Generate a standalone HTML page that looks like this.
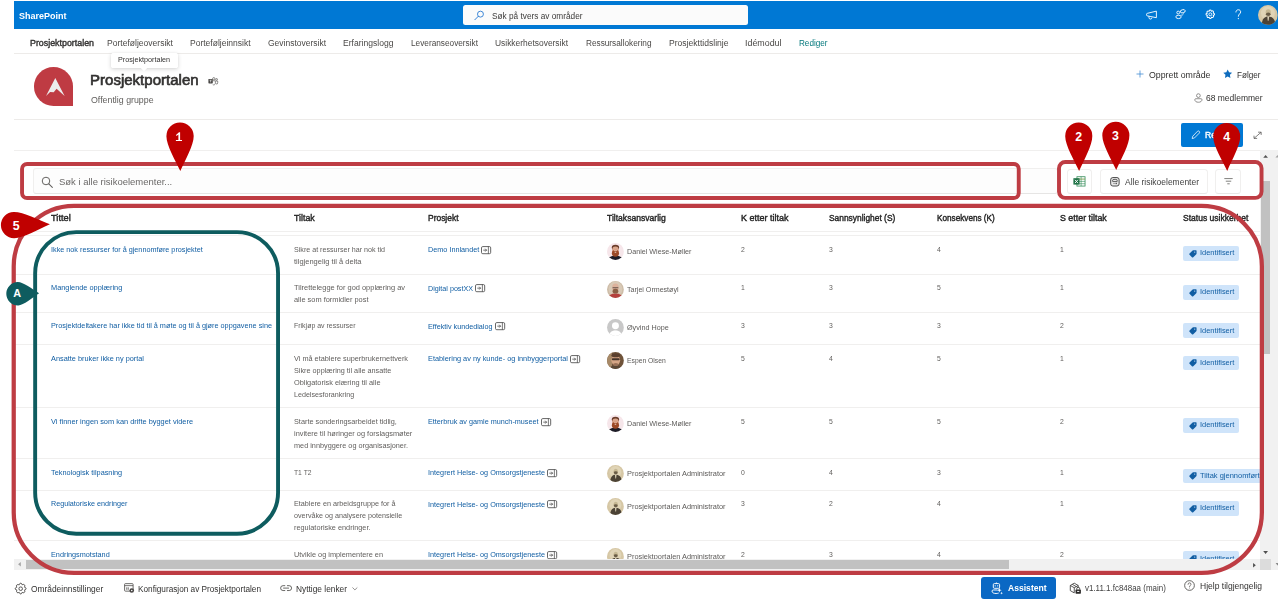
<!DOCTYPE html>
<html lang="nb">
<head>
<meta charset="utf-8">
<title>Prosjektportalen</title>
<style>
html,body{margin:0;padding:0;background:#fff;}
body{width:1278px;height:603px;position:relative;overflow:hidden;font-family:"Liberation Sans",sans-serif;}
.abs{position:absolute;}
.t{position:absolute;white-space:nowrap;transform-origin:0 50%;display:block;}
svg{position:absolute;overflow:visible;}
.hl{position:absolute;height:1px;background:#edebe9;}
#suite{left:14px;top:1px;width:1264px;height:28.2px;background:#0078d4;}
#sbox{left:462.5px;top:5.1px;width:285px;height:19.6px;background:#fbfbfb;border-radius:2.5px;}
#tip{left:110.7px;top:53.3px;width:67.3px;height:15.1px;background:#fff;border-radius:1.5px;box-shadow:0 1.2px 4.5px rgba(0,0,0,.17),0 0 1px rgba(0,0,0,.10);}
#tipb{left:141.4px;top:65.4px;width:6px;height:6px;background:#fff;transform:rotate(45deg);}
#logo{left:33.6px;top:67.2px;width:39.3px;height:39px;background:#bf3b43;border-radius:50% 50% 0 50%;}
#editbtn{left:1180.6px;top:122.7px;width:62.8px;height:24.2px;background:#0078d4;border-radius:2px;}
#sinput{left:33.0px;top:168.4px;width:1024.6px;height:26px;box-sizing:border-box;border:1px solid #f0efee;border-bottom-color:#e6e5e4;border-radius:3px;background:#fdfdfd;}
.tb{position:absolute;top:168.5px;height:25.6px;box-sizing:border-box;border:1px solid #f0efee;border-bottom-color:#e8e7e6;border-radius:3.5px;background:#fff;}
#tblclip{left:14px;top:200px;width:1246px;height:359.1px;overflow:hidden;}
#tbl{position:absolute;left:-14px;top:-200px;width:1278px;height:603px;}
.rl{position:absolute;left:14px;width:1246px;height:1px;background:#f0efee;}
.bdg{position:absolute;left:1183.2px;height:14.8px;background:#cfe4fa;border-radius:2px;}
.bdg svg{left:4.6px;top:2.7px;}
.pico{position:absolute;}
.avs{position:absolute;left:606.5px;}
#hsb{left:14px;top:559.1px;width:1246px;height:10.9px;background:#f1f1f1;}
#hth{left:25.6px;top:560.1px;width:983.3px;height:8.5px;background:#c1c1c1;}
#vsb{left:1260px;top:150.4px;width:18px;height:419.6px;background:#f1f1f1;}
#vth{left:1261.3px;top:180.8px;width:8.5px;height:173px;background:#c1c1c1;}
#corner{left:1260px;top:559.1px;width:11px;height:10.9px;background:#dcdcdc;}
#asst{left:980.6px;top:577.1px;width:75.1px;height:21.7px;background:#0a68c4;border-radius:3px;}
.box{position:absolute;box-sizing:border-box;}
</style>
</head>
<body>
<svg width="0" height="0" style="left:0;top:0"><defs><clipPath id="avc"><circle cx="8.5" cy="8.5" r="8.5"/></clipPath><filter id="bl" x="-10%" y="-10%" width="120%" height="120%"><feGaussianBlur stdDeviation="0.35"/></filter></defs></svg>
<!-- suite bar -->
<div class="abs" id="suite"></div>
<div class="abs" id="sbox"></div>
<svg style="left:473.6px;top:10px" width="10.6" height="10.6" viewBox="0 0 20 20"><circle cx="12.2" cy="7.8" r="5.6" fill="none" stroke="#2b7cd3" stroke-width="1.7"/><path d="M8.2 11.8 1.6 18.4" stroke="#2b7cd3" stroke-width="1.8" stroke-linecap="round"/></svg>
<!-- suite icons -->
<svg style="left:1145.8px;top:9.7px" width="11.6" height="9.8" viewBox="0 0 24 20"><path d="M21.5 2.2v13.6L8.5 13.2l-5.8-1.2a1.8 1.8 0 0 1-1.5-1.8V8.6A1.8 1.8 0 0 1 2.7 6.8z" fill="none" stroke="#fff" stroke-width="1.9" stroke-linejoin="round"/><path d="M6.2 12.8v2.6a3 3 0 0 0 6 .4" fill="none" stroke="#fff" stroke-width="1.9"/></svg>
<svg style="left:1175.4px;top:9.4px" width="11" height="10.4" viewBox="0 0 22 21"><ellipse cx="15.6" cy="4.6" rx="5" ry="3.2" fill="none" stroke="#fff" stroke-width="1.8" transform="rotate(-14 15.6 4.6)"/><circle cx="6.4" cy="7.2" r="2.9" fill="none" stroke="#fff" stroke-width="1.8"/><ellipse cx="7" cy="16" rx="5.4" ry="3.4" fill="none" stroke="#fff" stroke-width="1.8"/><path d="M11.6 12.4c2.6.6 5-.6 5.4-3.4" fill="none" stroke="#fff" stroke-width="1.6"/></svg>
<svg style="left:1204.6px;top:9.4px" width="10.6" height="10.6" viewBox="0 0 24 24"><path d="M12 2.2c1.2 0 2 .9 2.3 2.1l.2.8 1-.4c1.1-.6 2.4-.5 3.200.4s1 2.100.400 3.200l-.4 1 .8.200c1.200.3 2.100 1.100 2.100 2.300s-.9 2-2.100 2.300l-.8.200.4 1c.6 1.100.5 2.400-.4 3.200s-2.100 1-3.200.400l-1-.4-.2.800c-.3 1.200-1.100 2.100-2.300 2.100s-2-.9-2.300-2.100l-.2-.8-1 .4c-1.100.6-2.400.5-3.200-.4s-1-2.100-.4-3.200l.4-1-.8-.2C3.100 14 2.200 13.200 2.200 12s.9-2 2.100-2.300l.8-.2-.4-1c-.6-1.100-.5-2.400.4-3.200s2.100-1 3.200-.4l1 .4.200-.8C9.800 3.100 10.800 2.200 12 2.200z" fill="none" stroke="#fff" stroke-width="2.3" stroke-linejoin="round"/><circle cx="12" cy="12" r="3.300" fill="none" stroke="#fff" stroke-width="2"/></svg>
<svg style="left:1235.4px;top:9.4px" width="6.6" height="10.8" viewBox="0 0 12 20"><path d="M1.6 5.600C1.800 3 3.600 1.400 6.100 1.400s4.300 1.600 4.300 4c0 3.600-4.300 3.700-4.300 8" fill="none" stroke="#fff" stroke-width="1.700" stroke-linecap="round"/><circle cx="6.100" cy="17.800" r="1.200" fill="#fff"/></svg>
<svg style="left:1258.2px;top:4.9px" width="19.8" height="19.8" viewBox="0 0 17 17"><g clip-path="url(#avc)"><rect width="17" height="17" fill="#d6c7a5"/><g filter="url(#bl)"><circle cx="8.5" cy="7" r="6" fill="#e0d4b6"/><path d="M3.2 16.5C3.6 11.600 5.800 9.800 8.800 9.800s5.400 1.600 6 5.600l-.4 2H3.200z" fill="#4b4235"/><path d="M8 9.900h1.600l-.5 3.600h-.7z" fill="#ddd2b8"/><ellipse cx="8.800" cy="6.300" rx="2.200" ry="2.600" fill="#c5b792"/><ellipse cx="8.800" cy="7.900" rx="2" ry="1.500" fill="#6b5d46"/></g></g></svg>
<!-- nav line -->
<div class="hl" style="left:14px;top:53px;width:1264px;"></div>
<!-- tooltip -->
<div class="abs" id="tipb"></div>
<div class="abs" id="tip"></div>
<div class="abs" style="left:141.4px;top:64px;width:6px;height:6px;background:#fff;transform:rotate(45deg);"></div>
<!-- site header -->
<div class="abs" id="logo"></div>
<svg style="left:33.6px;top:67.2px" width="39.3" height="39" viewBox="0 0 39.3 39"><path d="M21.3 11 30.6 28.9 22.6 21.7 19.7 25.3 16.1 25 12 28.9z" fill="#ececec"/></svg>
<svg style="left:207.6px;top:76.6px" width="10.400" height="8" viewBox="0 0 26 20"><rect x="1" y="5" width="11" height="11" rx="1.500" fill="#4a4846"/><path d="M4 8h5M6.500 8v5.500" stroke="#fff" stroke-width="1.500"/><circle cx="14.500" cy="4.500" r="3" fill="none" stroke="#4a4846" stroke-width="1.600"/><circle cx="21.500" cy="6" r="2.200" fill="none" stroke="#4a4846" stroke-width="1.500"/><path d="M13 9.500h5.500v6a4.500 4.500 0 0 1-6.500 3.800M19.500 10h4.800v4.500a3.200 3.200 0 0 1-4.500 2.800" fill="none" stroke="#4a4846" stroke-width="1.500"/></svg>
<svg style="left:1135.600px;top:70.300px" width="8" height="8" viewBox="0 0 16 16"><path d="M8 1v14M1 8h14" stroke="#3a86d0" stroke-width="1.500"/></svg>
<svg style="left:1222.900px;top:69.300px" width="9.400" height="9.200" viewBox="0 0 20 19"><path d="M10 .8l2.900 5.900 6.500.9-4.700 4.600 1.100 6.500L10 15.600l-5.800 3.100 1.100-6.500L.6 7.600l6.500-.9z" fill="#0f6cbd"/></svg>
<svg style="left:1194.300px;top:92.600px" width="8.800" height="9.900" viewBox="0 0 17 19"><circle cx="8.500" cy="5" r="3.600" fill="none" stroke="#605e5c" stroke-width="1.300"/><path d="M3.400 11h10.200a1.800 1.800 0 0 1 1.800 1.800c0 3.400-3 5-6.900 5s-6.900-1.600-6.900-5A1.800 1.800 0 0 1 3.400 11z" fill="none" stroke="#605e5c" stroke-width="1.300"/></svg>
<div class="hl" style="left:14px;top:119px;width:1264px;"></div>
<div class="hl" style="left:14px;top:149.600px;width:1246px;background:#f0efee;"></div>
<!-- command bar -->
<div class="abs" id="editbtn"></div>
<svg style="left:1190.600px;top:130.400px" width="9.600" height="9.600" viewBox="0 0 20 20"><path d="M13.600 2.600a2.700 2.700 0 0 1 3.800 3.800L7.200 16.600l-4.800 1.200 1.200-4.800z" fill="none" stroke="#fff" stroke-width="1.600" stroke-linejoin="round"/></svg>
<svg style="left:1252.600px;top:130.600px" width="9.200" height="8.600" viewBox="0 0 20 18"><path d="M2.500 15.500 17.500 2.500M11 2.200h6.800v6M9 15.800H2.200v-6" fill="none" stroke="#484644" stroke-width="1.500"/></svg>
<!-- search row -->
<div class="abs" id="sinput"></div>
<svg style="left:41.100px;top:175.700px" width="12.200" height="12.200" viewBox="0 0 20 20"><circle cx="8.200" cy="8.200" r="6.200" fill="none" stroke="#605e5c" stroke-width="1.600"/><path d="M12.800 12.800 18.600 18.600" stroke="#605e5c" stroke-width="1.700" stroke-linecap="round"/></svg>
<div class="tb" style="left:1066.600px;width:25px;"></div>
<div class="tb" style="left:1100.100px;width:107.500px;"></div>
<div class="tb" style="left:1215.400px;width:25.200px;"></div>
<!-- excel icon -->
<svg style="left:1073px;top:176.200px" width="12.800" height="10.800" viewBox="0 0 26 22"><rect x="8" y="1.500" width="16.500" height="19" fill="#fff" stroke="#2f8a55" stroke-width="1.600"/><path d="M8 6.300h16.500M8 11h16.500M8 15.700h16.500M16.500 1.500v19" stroke="#2f8a55" stroke-width="1.200"/><path d="M8 6.300h16.500" stroke="#c8a93a" stroke-width="1.200" opacity=".7"/><rect x=".8" y="4.500" width="12.500" height="13" fill="#1e7145"/><path d="M4 7.800l6 6.600M10 7.800l-6 6.600" stroke="#fff" stroke-width="1.900"/></svg>
<!-- list icon -->
<svg style="left:1110.200px;top:177.200px" width="9.800" height="9.600" viewBox="0 0 20 20"><rect x="1.200" y="1.200" width="17.600" height="17.600" rx="4.500" fill="#e8e8e8" stroke="#424242" stroke-width="2"/><path d="M5 8.800V8a3 3 0 0 1 3-3h4a3 3 0 0 1 3 3v.8M5 9.500h10M7.200 13.500h2M11.500 13.500h2.500M12.800 12v3" fill="none" stroke="#424242" stroke-width="1.700"/></svg>
<!-- filter icon -->
<svg style="left:1223.800px;top:178.400px" width="9" height="6.400" viewBox="0 0 18 13"><path d="M.5 1.200h17M3.500 6.500h11M6.500 11.800h5" stroke="#605e5c" stroke-width="1.600"/></svg>

<!-- table (clipped) -->
<div class="abs" id="tblclip"><div id="tbl">
<div class="rl" style="top:230.70px"></div><div class="rl" style="top:234.50px"></div><div class="rl" style="top:273.75px"></div><div class="rl" style="top:312.00px"></div><div class="rl" style="top:343.75px"></div><div class="rl" style="top:406.50px"></div><div class="rl" style="top:457.50px"></div><div class="rl" style="top:489.50px"></div><div class="rl" style="top:540.00px"></div>
<div class="bdg" style="top:246.20px;width:55.7px"><svg viewBox="0 0 16 16" width="9.8" height="9.8"><path d="M8.6 2H13a1 1 0 0 1 1 1v4.4a1.5 1.5 0 0 1-.44 1.06l-5 5a1.5 1.5 0 0 1-2.12 0L2.54 9.56a1.5 1.5 0 0 1 0-2.12l5-5A1.5 1.5 0 0 1 8.6 2zm2.4 4a1 1 0 1 0 0-2 1 1 0 0 0 0 2z" fill="#115ea3"/></svg></div><div class="bdg" style="top:285.00px;width:55.7px"><svg viewBox="0 0 16 16" width="9.8" height="9.8"><path d="M8.6 2H13a1 1 0 0 1 1 1v4.4a1.5 1.5 0 0 1-.44 1.06l-5 5a1.5 1.5 0 0 1-2.12 0L2.54 9.56a1.5 1.5 0 0 1 0-2.12l5-5A1.5 1.5 0 0 1 8.6 2zm2.4 4a1 1 0 1 0 0-2 1 1 0 0 0 0 2z" fill="#115ea3"/></svg></div><div class="bdg" style="top:323.30px;width:55.7px"><svg viewBox="0 0 16 16" width="9.8" height="9.8"><path d="M8.6 2H13a1 1 0 0 1 1 1v4.4a1.5 1.5 0 0 1-.44 1.06l-5 5a1.5 1.5 0 0 1-2.12 0L2.54 9.56a1.5 1.5 0 0 1 0-2.12l5-5A1.5 1.5 0 0 1 8.6 2zm2.4 4a1 1 0 1 0 0-2 1 1 0 0 0 0 2z" fill="#115ea3"/></svg></div><div class="bdg" style="top:355.70px;width:55.7px"><svg viewBox="0 0 16 16" width="9.8" height="9.8"><path d="M8.6 2H13a1 1 0 0 1 1 1v4.4a1.5 1.5 0 0 1-.44 1.06l-5 5a1.5 1.5 0 0 1-2.12 0L2.54 9.56a1.5 1.5 0 0 1 0-2.12l5-5A1.5 1.5 0 0 1 8.6 2zm2.4 4a1 1 0 1 0 0-2 1 1 0 0 0 0 2z" fill="#115ea3"/></svg></div><div class="bdg" style="top:417.90px;width:55.7px"><svg viewBox="0 0 16 16" width="9.8" height="9.8"><path d="M8.6 2H13a1 1 0 0 1 1 1v4.4a1.5 1.5 0 0 1-.44 1.06l-5 5a1.5 1.5 0 0 1-2.12 0L2.54 9.56a1.5 1.5 0 0 1 0-2.12l5-5A1.5 1.5 0 0 1 8.6 2zm2.4 4a1 1 0 1 0 0-2 1 1 0 0 0 0 2z" fill="#115ea3"/></svg></div><div class="bdg" style="top:468.60px;width:82px"><svg viewBox="0 0 16 16" width="9.8" height="9.8"><path d="M8.6 2H13a1 1 0 0 1 1 1v4.4a1.5 1.5 0 0 1-.44 1.06l-5 5a1.5 1.5 0 0 1-2.12 0L2.54 9.56a1.5 1.5 0 0 1 0-2.12l5-5A1.5 1.5 0 0 1 8.6 2zm2.4 4a1 1 0 1 0 0-2 1 1 0 0 0 0 2z" fill="#115ea3"/></svg></div><div class="bdg" style="top:501.00px;width:55.7px"><svg viewBox="0 0 16 16" width="9.8" height="9.8"><path d="M8.6 2H13a1 1 0 0 1 1 1v4.4a1.5 1.5 0 0 1-.44 1.06l-5 5a1.5 1.5 0 0 1-2.12 0L2.54 9.56a1.5 1.5 0 0 1 0-2.12l5-5A1.5 1.5 0 0 1 8.6 2zm2.4 4a1 1 0 1 0 0-2 1 1 0 0 0 0 2z" fill="#115ea3"/></svg></div><div class="bdg" style="top:551.30px;width:55.7px"><svg viewBox="0 0 16 16" width="9.8" height="9.8"><path d="M8.6 2H13a1 1 0 0 1 1 1v4.4a1.5 1.5 0 0 1-.44 1.06l-5 5a1.5 1.5 0 0 1-2.12 0L2.54 9.56a1.5 1.5 0 0 1 0-2.12l5-5A1.5 1.5 0 0 1 8.6 2zm2.4 4a1 1 0 1 0 0-2 1 1 0 0 0 0 2z" fill="#115ea3"/></svg></div>
<span class="t" style="left:50.75px;top:213.42px;font-size:9.2px;line-height:11.96px;color:#242424;font-weight:400;-webkit-text-stroke:0.40px #242424;transform:scaleX(1.0088)">Tittel</span>
<span class="t" style="left:293.75px;top:213.42px;font-size:9.2px;line-height:11.96px;color:#242424;font-weight:400;-webkit-text-stroke:0.40px #242424;transform:scaleX(0.9602)">Tiltak</span>
<span class="t" style="left:427.50px;top:213.42px;font-size:9.2px;line-height:11.96px;color:#242424;font-weight:400;-webkit-text-stroke:0.40px #242424;transform:scaleX(0.9186)">Prosjekt</span>
<span class="t" style="left:607.00px;top:213.42px;font-size:9.2px;line-height:11.96px;color:#242424;font-weight:400;-webkit-text-stroke:0.40px #242424;transform:scaleX(0.9328)">Tiltaksansvarlig</span>
<span class="t" style="left:740.50px;top:213.42px;font-size:9.2px;line-height:11.96px;color:#242424;font-weight:400;-webkit-text-stroke:0.40px #242424;transform:scaleX(0.9791)">K etter tiltak</span>
<span class="t" style="left:829.10px;top:213.42px;font-size:9.2px;line-height:11.96px;color:#242424;font-weight:400;-webkit-text-stroke:0.40px #242424;transform:scaleX(0.9141)">Sannsynlighet (S)</span>
<span class="t" style="left:936.75px;top:213.42px;font-size:9.2px;line-height:11.96px;color:#242424;font-weight:400;-webkit-text-stroke:0.40px #242424;transform:scaleX(0.8904)">Konsekvens (K)</span>
<span class="t" style="left:1060.00px;top:213.42px;font-size:9.2px;line-height:11.96px;color:#242424;font-weight:400;-webkit-text-stroke:0.40px #242424;transform:scaleX(0.9636)">S etter tiltak</span>
<span class="t" style="left:1183.25px;top:213.42px;font-size:9.2px;line-height:11.96px;color:#242424;font-weight:400;-webkit-text-stroke:0.40px #242424;transform:scaleX(0.9293)">Status usikkerhet</span>
<span class="t" style="left:50.75px;top:244.75px;font-size:8.0px;line-height:10.4px;color:#115ea3;font-weight:400;transform:scaleX(0.9053)">Ikke nok ressurser for å gjennomføre prosjektet</span>
<span class="t" style="left:50.75px;top:283.20px;font-size:8.0px;line-height:10.4px;color:#115ea3;font-weight:400;transform:scaleX(0.9207)">Manglende opplæring</span>
<span class="t" style="left:50.75px;top:321.30px;font-size:8.0px;line-height:10.4px;color:#115ea3;font-weight:400;transform:scaleX(0.9102)">Prosjektdeltakere har ikke tid til å møte og til å gjøre oppgavene sine</span>
<span class="t" style="left:50.75px;top:353.70px;font-size:8.0px;line-height:10.4px;color:#115ea3;font-weight:400;transform:scaleX(0.9172)">Ansatte bruker ikke ny portal</span>
<span class="t" style="left:50.75px;top:417.00px;font-size:8.0px;line-height:10.4px;color:#115ea3;font-weight:400;transform:scaleX(0.9238)">Vi finner ingen som kan drifte bygget videre</span>
<span class="t" style="left:50.75px;top:467.70px;font-size:8.0px;line-height:10.4px;color:#115ea3;font-weight:400;transform:scaleX(0.9148)">Teknologisk tilpasning</span>
<span class="t" style="left:50.75px;top:499.30px;font-size:8.0px;line-height:10.4px;color:#115ea3;font-weight:400;transform:scaleX(0.9007)">Regulatoriske endringer</span>
<span class="t" style="left:50.75px;top:549.75px;font-size:8.0px;line-height:10.4px;color:#115ea3;font-weight:400;transform:scaleX(0.9103)">Endringsmotstand</span>
<span class="t" style="left:293.50px;top:244.75px;font-size:8.0px;line-height:10.4px;color:#605e5c;font-weight:400;transform:scaleX(0.8898)">Sikre at ressurser har nok tid</span>
<span class="t" style="left:293.50px;top:256.75px;font-size:8.0px;line-height:10.4px;color:#605e5c;font-weight:400;transform:scaleX(0.9369)">tilgjengelig til å delta</span>
<span class="t" style="left:293.50px;top:283.20px;font-size:8.0px;line-height:10.4px;color:#605e5c;font-weight:400;transform:scaleX(0.9302)">Tilrettelegge for god opplæring av</span>
<span class="t" style="left:293.50px;top:295.20px;font-size:8.0px;line-height:10.4px;color:#605e5c;font-weight:400;transform:scaleX(0.9256)">alle som formidler post</span>
<span class="t" style="left:293.50px;top:321.30px;font-size:8.0px;line-height:10.4px;color:#605e5c;font-weight:400;transform:scaleX(0.8700)">Frikjøp av ressurser</span>
<span class="t" style="left:293.50px;top:353.70px;font-size:8.0px;line-height:10.4px;color:#605e5c;font-weight:400;transform:scaleX(0.9134)">Vi må etablere superbrukernettverk</span>
<span class="t" style="left:293.50px;top:365.70px;font-size:8.0px;line-height:10.4px;color:#605e5c;font-weight:400;transform:scaleX(0.9074)">Sikre opplæring til alle ansatte</span>
<span class="t" style="left:293.50px;top:377.70px;font-size:8.0px;line-height:10.4px;color:#605e5c;font-weight:400;transform:scaleX(0.9219)">Obligatorisk elæring til alle</span>
<span class="t" style="left:293.50px;top:389.70px;font-size:8.0px;line-height:10.4px;color:#605e5c;font-weight:400;transform:scaleX(0.8911)">Ledelsesforankring</span>
<span class="t" style="left:293.50px;top:417.00px;font-size:8.0px;line-height:10.4px;color:#605e5c;font-weight:400;transform:scaleX(0.9132)">Starte sonderingsarbeidet tidlig,</span>
<span class="t" style="left:293.50px;top:429.00px;font-size:8.0px;line-height:10.4px;color:#605e5c;font-weight:400;transform:scaleX(0.9235)">invitere til høringer og forslagsmøter</span>
<span class="t" style="left:293.50px;top:441.00px;font-size:8.0px;line-height:10.4px;color:#605e5c;font-weight:400;transform:scaleX(0.9121)">med innbyggere og organisasjoner.</span>
<span class="t" style="left:293.50px;top:467.70px;font-size:8.0px;line-height:10.4px;color:#605e5c;font-weight:400;transform:scaleX(0.8434)">T1 T2</span>
<span class="t" style="left:293.50px;top:499.30px;font-size:8.0px;line-height:10.4px;color:#605e5c;font-weight:400;transform:scaleX(0.9020)">Etablere en arbeidsgruppe for å</span>
<span class="t" style="left:293.50px;top:511.30px;font-size:8.0px;line-height:10.4px;color:#605e5c;font-weight:400;transform:scaleX(0.8949)">overvåke og analysere potensielle</span>
<span class="t" style="left:293.50px;top:523.30px;font-size:8.0px;line-height:10.4px;color:#605e5c;font-weight:400;transform:scaleX(0.9150)">regulatoriske endringer.</span>
<span class="t" style="left:293.50px;top:549.75px;font-size:8.0px;line-height:10.4px;color:#605e5c;font-weight:400;transform:scaleX(0.9181)">Utvikle og implementere en</span>
<span class="t" style="left:427.50px;top:245.05px;font-size:8.0px;line-height:10.4px;color:#115ea3;font-weight:400;transform:scaleX(0.9073)">Demo Innlandet</span>
<span class="t" style="left:427.50px;top:283.50px;font-size:8.0px;line-height:10.4px;color:#115ea3;font-weight:400;transform:scaleX(0.8955)">Digital postXX</span>
<span class="t" style="left:427.50px;top:321.60px;font-size:8.0px;line-height:10.4px;color:#115ea3;font-weight:400;transform:scaleX(0.9025)">Effektiv kundedialog</span>
<span class="t" style="left:427.50px;top:354.00px;font-size:8.0px;line-height:10.4px;color:#115ea3;font-weight:400;transform:scaleX(0.9178)">Etablering av ny kunde- og innbyggerportal</span>
<span class="t" style="left:427.50px;top:417.30px;font-size:8.0px;line-height:10.4px;color:#115ea3;font-weight:400;transform:scaleX(0.9037)">Etterbruk av gamle munch-museet</span>
<span class="t" style="left:427.50px;top:468.00px;font-size:8.0px;line-height:10.4px;color:#115ea3;font-weight:400;transform:scaleX(0.9073)">Integrert Helse- og Omsorgstjeneste</span>
<span class="t" style="left:427.50px;top:499.60px;font-size:8.0px;line-height:10.4px;color:#115ea3;font-weight:400;transform:scaleX(0.9073)">Integrert Helse- og Omsorgstjeneste</span>
<span class="t" style="left:427.50px;top:550.05px;font-size:8.0px;line-height:10.4px;color:#115ea3;font-weight:400;transform:scaleX(0.9073)">Integrert Helse- og Omsorgstjeneste</span>
<span class="t" style="left:626.50px;top:247.00px;font-size:8.0px;line-height:10.4px;color:#5c5a58;font-weight:400;transform:scaleX(0.8956)">Daniel Wiese-Møller</span>
<span class="t" style="left:626.50px;top:285.25px;font-size:8.0px;line-height:10.4px;color:#5c5a58;font-weight:400;transform:scaleX(0.8844)">Tarjei Ormestøyl</span>
<span class="t" style="left:626.50px;top:323.25px;font-size:8.0px;line-height:10.4px;color:#5c5a58;font-weight:400;transform:scaleX(0.9027)">Øyvind Hope</span>
<span class="t" style="left:626.50px;top:355.75px;font-size:8.0px;line-height:10.4px;color:#5c5a58;font-weight:400;transform:scaleX(0.8458)">Espen Olsen</span>
<span class="t" style="left:626.50px;top:418.75px;font-size:8.0px;line-height:10.4px;color:#5c5a58;font-weight:400;transform:scaleX(0.8956)">Daniel Wiese-Møller</span>
<span class="t" style="left:626.50px;top:469.00px;font-size:8.0px;line-height:10.4px;color:#5c5a58;font-weight:400;transform:scaleX(0.9230)">Prosjektportalen Administrator</span>
<span class="t" style="left:626.50px;top:501.75px;font-size:8.0px;line-height:10.4px;color:#5c5a58;font-weight:400;transform:scaleX(0.9230)">Prosjektportalen Administrator</span>
<span class="t" style="left:626.50px;top:551.75px;font-size:8.0px;line-height:10.4px;color:#5c5a58;font-weight:400;transform:scaleX(0.9230)">Prosjektportalen Administrator</span>
<span class="t" style="left:740.50px;top:244.75px;font-size:8.0px;line-height:10.4px;color:#605e5c;font-weight:400;transform:scaleX(0.8533)">2</span>
<span class="t" style="left:740.50px;top:283.20px;font-size:8.0px;line-height:10.4px;color:#605e5c;font-weight:400;transform:scaleX(0.8533)">1</span>
<span class="t" style="left:740.50px;top:321.30px;font-size:8.0px;line-height:10.4px;color:#605e5c;font-weight:400;transform:scaleX(0.8533)">3</span>
<span class="t" style="left:740.50px;top:353.70px;font-size:8.0px;line-height:10.4px;color:#605e5c;font-weight:400;transform:scaleX(0.8533)">5</span>
<span class="t" style="left:740.50px;top:417.00px;font-size:8.0px;line-height:10.4px;color:#605e5c;font-weight:400;transform:scaleX(0.8533)">5</span>
<span class="t" style="left:740.50px;top:467.70px;font-size:8.0px;line-height:10.4px;color:#605e5c;font-weight:400;transform:scaleX(0.8533)">0</span>
<span class="t" style="left:740.50px;top:499.30px;font-size:8.0px;line-height:10.4px;color:#605e5c;font-weight:400;transform:scaleX(0.8533)">3</span>
<span class="t" style="left:740.50px;top:549.75px;font-size:8.0px;line-height:10.4px;color:#605e5c;font-weight:400;transform:scaleX(0.8533)">2</span>
<span class="t" style="left:829.00px;top:244.75px;font-size:8.0px;line-height:10.4px;color:#605e5c;font-weight:400;transform:scaleX(0.8533)">3</span>
<span class="t" style="left:829.00px;top:283.20px;font-size:8.0px;line-height:10.4px;color:#605e5c;font-weight:400;transform:scaleX(0.8533)">3</span>
<span class="t" style="left:829.00px;top:321.30px;font-size:8.0px;line-height:10.4px;color:#605e5c;font-weight:400;transform:scaleX(0.8533)">3</span>
<span class="t" style="left:829.00px;top:353.70px;font-size:8.0px;line-height:10.4px;color:#605e5c;font-weight:400;transform:scaleX(0.8533)">4</span>
<span class="t" style="left:829.00px;top:417.00px;font-size:8.0px;line-height:10.4px;color:#605e5c;font-weight:400;transform:scaleX(0.8533)">5</span>
<span class="t" style="left:829.00px;top:467.70px;font-size:8.0px;line-height:10.4px;color:#605e5c;font-weight:400;transform:scaleX(0.8533)">4</span>
<span class="t" style="left:829.00px;top:499.30px;font-size:8.0px;line-height:10.4px;color:#605e5c;font-weight:400;transform:scaleX(0.8533)">2</span>
<span class="t" style="left:829.00px;top:549.75px;font-size:8.0px;line-height:10.4px;color:#605e5c;font-weight:400;transform:scaleX(0.8533)">3</span>
<span class="t" style="left:936.75px;top:244.75px;font-size:8.0px;line-height:10.4px;color:#605e5c;font-weight:400;transform:scaleX(0.8533)">4</span>
<span class="t" style="left:936.75px;top:283.20px;font-size:8.0px;line-height:10.4px;color:#605e5c;font-weight:400;transform:scaleX(0.8533)">5</span>
<span class="t" style="left:936.75px;top:321.30px;font-size:8.0px;line-height:10.4px;color:#605e5c;font-weight:400;transform:scaleX(0.8533)">3</span>
<span class="t" style="left:936.75px;top:353.70px;font-size:8.0px;line-height:10.4px;color:#605e5c;font-weight:400;transform:scaleX(0.8533)">5</span>
<span class="t" style="left:936.75px;top:417.00px;font-size:8.0px;line-height:10.4px;color:#605e5c;font-weight:400;transform:scaleX(0.8533)">5</span>
<span class="t" style="left:936.75px;top:467.70px;font-size:8.0px;line-height:10.4px;color:#605e5c;font-weight:400;transform:scaleX(0.8533)">3</span>
<span class="t" style="left:936.75px;top:499.30px;font-size:8.0px;line-height:10.4px;color:#605e5c;font-weight:400;transform:scaleX(0.8533)">4</span>
<span class="t" style="left:936.75px;top:549.75px;font-size:8.0px;line-height:10.4px;color:#605e5c;font-weight:400;transform:scaleX(0.8533)">4</span>
<span class="t" style="left:1060.00px;top:244.75px;font-size:8.0px;line-height:10.4px;color:#605e5c;font-weight:400;transform:scaleX(0.8533)">1</span>
<span class="t" style="left:1060.00px;top:283.20px;font-size:8.0px;line-height:10.4px;color:#605e5c;font-weight:400;transform:scaleX(0.8533)">1</span>
<span class="t" style="left:1060.00px;top:321.30px;font-size:8.0px;line-height:10.4px;color:#605e5c;font-weight:400;transform:scaleX(0.8533)">2</span>
<span class="t" style="left:1060.00px;top:353.70px;font-size:8.0px;line-height:10.4px;color:#605e5c;font-weight:400;transform:scaleX(0.8533)">1</span>
<span class="t" style="left:1060.00px;top:417.00px;font-size:8.0px;line-height:10.4px;color:#605e5c;font-weight:400;transform:scaleX(0.8533)">2</span>
<span class="t" style="left:1060.00px;top:467.70px;font-size:8.0px;line-height:10.4px;color:#605e5c;font-weight:400;transform:scaleX(0.8533)">1</span>
<span class="t" style="left:1060.00px;top:499.30px;font-size:8.0px;line-height:10.4px;color:#605e5c;font-weight:400;transform:scaleX(0.8533)">1</span>
<span class="t" style="left:1060.00px;top:549.75px;font-size:8.0px;line-height:10.4px;color:#605e5c;font-weight:400;transform:scaleX(0.8533)">2</span>
<span class="t" style="left:1199.60px;top:248.40px;font-size:8.0px;line-height:10.4px;color:#115ea3;font-weight:400;transform:scaleX(0.9294)">Identifisert</span>
<span class="t" style="left:1199.60px;top:287.20px;font-size:8.0px;line-height:10.4px;color:#115ea3;font-weight:400;transform:scaleX(0.9294)">Identifisert</span>
<span class="t" style="left:1199.60px;top:325.50px;font-size:8.0px;line-height:10.4px;color:#115ea3;font-weight:400;transform:scaleX(0.9294)">Identifisert</span>
<span class="t" style="left:1199.60px;top:357.90px;font-size:8.0px;line-height:10.4px;color:#115ea3;font-weight:400;transform:scaleX(0.9294)">Identifisert</span>
<span class="t" style="left:1199.60px;top:420.10px;font-size:8.0px;line-height:10.4px;color:#115ea3;font-weight:400;transform:scaleX(0.9294)">Identifisert</span>
<span class="t" style="left:1199.60px;top:470.80px;font-size:8.0px;line-height:10.4px;color:#115ea3;font-weight:400;transform:scaleX(0.9351)">Tiltak gjennomført</span>
<span class="t" style="left:1199.60px;top:503.20px;font-size:8.0px;line-height:10.4px;color:#115ea3;font-weight:400;transform:scaleX(0.9294)">Identifisert</span>
<span class="t" style="left:1199.60px;top:553.50px;font-size:8.0px;line-height:10.4px;color:#115ea3;font-weight:400;transform:scaleX(0.9294)">Identifisert</span>
<svg class="pico" style="left:481.35px;top:245.70px" viewBox="0 0 20 16" width="10.2" height="8.3"><rect x="1" y="1" width="18" height="14" rx="2.5" fill="none" stroke="#424242" stroke-width="1.6"/><path d="M14.5 1v14" stroke="#424242" stroke-width="1.4"/><path d="M4.5 8h6.5M8.3 5.2 11 8l-2.7 2.8" fill="none" stroke="#424242" stroke-width="1.5"/></svg><svg class="pico" style="left:475.10px;top:284.15px" viewBox="0 0 20 16" width="10.2" height="8.3"><rect x="1" y="1" width="18" height="14" rx="2.5" fill="none" stroke="#424242" stroke-width="1.6"/><path d="M14.5 1v14" stroke="#424242" stroke-width="1.4"/><path d="M4.5 8h6.5M8.3 5.2 11 8l-2.7 2.8" fill="none" stroke="#424242" stroke-width="1.5"/></svg><svg class="pico" style="left:494.60px;top:322.25px" viewBox="0 0 20 16" width="10.2" height="8.3"><rect x="1" y="1" width="18" height="14" rx="2.5" fill="none" stroke="#424242" stroke-width="1.6"/><path d="M14.5 1v14" stroke="#424242" stroke-width="1.4"/><path d="M4.5 8h6.5M8.3 5.2 11 8l-2.7 2.8" fill="none" stroke="#424242" stroke-width="1.5"/></svg><svg class="pico" style="left:570.10px;top:354.65px" viewBox="0 0 20 16" width="10.2" height="8.3"><rect x="1" y="1" width="18" height="14" rx="2.5" fill="none" stroke="#424242" stroke-width="1.6"/><path d="M14.5 1v14" stroke="#424242" stroke-width="1.4"/><path d="M4.5 8h6.5M8.3 5.2 11 8l-2.7 2.8" fill="none" stroke="#424242" stroke-width="1.5"/></svg><svg class="pico" style="left:540.60px;top:417.95px" viewBox="0 0 20 16" width="10.2" height="8.3"><rect x="1" y="1" width="18" height="14" rx="2.5" fill="none" stroke="#424242" stroke-width="1.6"/><path d="M14.5 1v14" stroke="#424242" stroke-width="1.4"/><path d="M4.5 8h6.5M8.3 5.2 11 8l-2.7 2.8" fill="none" stroke="#424242" stroke-width="1.5"/></svg><svg class="pico" style="left:547.10px;top:468.65px" viewBox="0 0 20 16" width="10.2" height="8.3"><rect x="1" y="1" width="18" height="14" rx="2.5" fill="none" stroke="#424242" stroke-width="1.6"/><path d="M14.5 1v14" stroke="#424242" stroke-width="1.4"/><path d="M4.5 8h6.5M8.3 5.2 11 8l-2.7 2.8" fill="none" stroke="#424242" stroke-width="1.5"/></svg><svg class="pico" style="left:547.10px;top:500.25px" viewBox="0 0 20 16" width="10.2" height="8.3"><rect x="1" y="1" width="18" height="14" rx="2.5" fill="none" stroke="#424242" stroke-width="1.6"/><path d="M14.5 1v14" stroke="#424242" stroke-width="1.4"/><path d="M4.5 8h6.5M8.3 5.2 11 8l-2.7 2.8" fill="none" stroke="#424242" stroke-width="1.5"/></svg><svg class="pico" style="left:547.10px;top:550.70px" viewBox="0 0 20 16" width="10.2" height="8.3"><rect x="1" y="1" width="18" height="14" rx="2.5" fill="none" stroke="#424242" stroke-width="1.6"/><path d="M14.5 1v14" stroke="#424242" stroke-width="1.4"/><path d="M4.5 8h6.5M8.3 5.2 11 8l-2.7 2.8" fill="none" stroke="#424242" stroke-width="1.5"/></svg>
<svg class="avs" style="top:242.80px" width="16.9" height="16.9" viewBox="0 0 17 17"><g clip-path="url(#avc)"><rect width="17" height="17" fill="#f6e6ea"/><g filter="url(#bl)"><ellipse cx="8.500" cy="18.200" rx="8.600" ry="5.600" fill="#1b1e26"/><ellipse cx="8.500" cy="4.600" rx="3.700" ry="2.900" fill="#6a3d2a"/><ellipse cx="8.500" cy="7" rx="3.300" ry="3.400" fill="#dba68c"/><ellipse cx="8.500" cy="10.400" rx="3.600" ry="3.500" fill="#9b4825"/><ellipse cx="8.500" cy="7.400" rx="2" ry="1.100" fill="#dba68c"/><ellipse cx="8.500" cy="9.700" rx="1.100" ry=".450" fill="#f0e4dc"/></g></g></svg><svg class="avs" style="top:281.05px" width="16.9" height="16.9" viewBox="0 0 17 17"><g clip-path="url(#avc)"><rect width="17" height="17" fill="#cdbca7"/><g filter="url(#bl)"><ellipse cx="8.500" cy="8" rx="7" ry="7.500" fill="#d8c9b6"/><ellipse cx="8.500" cy="17.600" rx="7.800" ry="5" fill="#b4403c"/><ellipse cx="8.500" cy="6.700" rx="3.300" ry="4.100" fill="#dcb29c"/><ellipse cx="8.500" cy="10.200" rx="2.900" ry="2.500" fill="#8a5e44"/><path d="M5.600 6.800h5.800" stroke="#54453c" stroke-width=".900"/></g></g></svg><svg class="avs" style="top:319.05px" width="16.9" height="16.9" viewBox="0 0 17 17"><g clip-path="url(#avc)"><rect width="17" height="17" fill="#c8c8c8"/><ellipse cx="8.5" cy="16.6" rx="6.3" ry="5.2" fill="#fff"/><circle cx="8.5" cy="6.7" r="4.5" fill="#c8c8c8"/><circle cx="8.5" cy="6.7" r="3.5" fill="#fff"/></g></svg><svg class="avs" style="top:351.55px" width="16.9" height="16.9" viewBox="0 0 17 17"><g clip-path="url(#avc)"><rect width="17" height="17" fill="#6f5339"/><g filter="url(#bl)"><rect x="0" y="0" width="5" height="17" fill="#a88a68"/><ellipse cx="8.8" cy="16.4" rx="5.6" ry="3.4" fill="#5a4636"/><ellipse cx="8.8" cy="8.3" rx="4.4" ry="5.4" fill="#d5a585"/><ellipse cx="8.8" cy="3.3" rx="4.3" ry="2.1" fill="#5a3f2e"/><rect x="4.9" y="6.3" width="7.8" height="2.1" rx=".8" fill="#2a201b" opacity=".85"/><ellipse cx="8.8" cy="12.6" rx="2.8" ry="1.6" fill="#9a7258"/></g></g></svg><svg class="avs" style="top:414.55px" width="16.9" height="16.9" viewBox="0 0 17 17"><g clip-path="url(#avc)"><rect width="17" height="17" fill="#f6e6ea"/><g filter="url(#bl)"><ellipse cx="8.500" cy="18.200" rx="8.600" ry="5.600" fill="#1b1e26"/><ellipse cx="8.500" cy="4.600" rx="3.700" ry="2.900" fill="#6a3d2a"/><ellipse cx="8.500" cy="7" rx="3.300" ry="3.400" fill="#dba68c"/><ellipse cx="8.500" cy="10.400" rx="3.600" ry="3.500" fill="#9b4825"/><ellipse cx="8.500" cy="7.400" rx="2" ry="1.100" fill="#dba68c"/><ellipse cx="8.500" cy="9.700" rx="1.100" ry=".450" fill="#f0e4dc"/></g></g></svg><svg class="avs" style="top:464.80px" width="16.9" height="16.9" viewBox="0 0 17 17"><g clip-path="url(#avc)"><rect width="17" height="17" fill="#d6c7a5"/><g filter="url(#bl)"><circle cx="8.5" cy="7" r="6" fill="#e0d4b6"/><path d="M3.2 16.5C3.6 11.600 5.800 9.800 8.800 9.800s5.400 1.600 6 5.600l-.4 2H3.200z" fill="#4b4235"/><path d="M8 9.900h1.600l-.5 3.600h-.7z" fill="#ddd2b8"/><ellipse cx="8.800" cy="6.300" rx="2.200" ry="2.600" fill="#c5b792"/><ellipse cx="8.800" cy="7.900" rx="2" ry="1.500" fill="#6b5d46"/></g></g></svg><svg class="avs" style="top:497.55px" width="16.9" height="16.9" viewBox="0 0 17 17"><g clip-path="url(#avc)"><rect width="17" height="17" fill="#d6c7a5"/><g filter="url(#bl)"><circle cx="8.5" cy="7" r="6" fill="#e0d4b6"/><path d="M3.2 16.5C3.6 11.600 5.800 9.800 8.800 9.800s5.400 1.600 6 5.600l-.4 2H3.200z" fill="#4b4235"/><path d="M8 9.900h1.600l-.5 3.600h-.7z" fill="#ddd2b8"/><ellipse cx="8.800" cy="6.300" rx="2.200" ry="2.600" fill="#c5b792"/><ellipse cx="8.800" cy="7.900" rx="2" ry="1.500" fill="#6b5d46"/></g></g></svg><svg class="avs" style="top:547.55px" width="16.9" height="16.9" viewBox="0 0 17 17"><g clip-path="url(#avc)"><rect width="17" height="17" fill="#d6c7a5"/><g filter="url(#bl)"><circle cx="8.5" cy="7" r="6" fill="#e0d4b6"/><path d="M3.2 16.5C3.6 11.600 5.800 9.800 8.800 9.800s5.400 1.600 6 5.600l-.4 2H3.200z" fill="#4b4235"/><path d="M8 9.900h1.600l-.5 3.600h-.7z" fill="#ddd2b8"/><ellipse cx="8.800" cy="6.300" rx="2.200" ry="2.600" fill="#c5b792"/><ellipse cx="8.800" cy="7.900" rx="2" ry="1.500" fill="#6b5d46"/></g></g></svg>
</div></div>

<!-- scrollbars -->
<div class="abs" id="vsb"></div><div class="abs" id="vth"></div>
<div class="abs" id="hsb"></div><div class="abs" id="hth"></div>
<div class="abs" id="corner"></div>
<svg style="left:1262.9px;top:155.1px" width="5.2" height="2.8" viewBox="0 0 10 6"><path d="M0 6 5 0l5 6z" fill="#505050"/></svg>
<svg style="left:1262.9px;top:551.3px" width="5.2" height="2.9" viewBox="0 0 10 6"><path d="M0 0h10L5 6z" fill="#505050"/></svg>
<svg style="left:18px;top:562.4px" width="2.9" height="4.6" viewBox="0 0 6 10"><path d="M6 0v10L0 5z" fill="#a3a3a3"/></svg>
<svg style="left:1252.9px;top:562.5px" width="2.9" height="4.6" viewBox="0 0 6 10"><path d="M0 0v10l6-5z" fill="#505050"/></svg>
<svg style="left:1274.5px;top:155.2px" width="5.2" height="2.6" viewBox="0 0 10 6"><path d="M0 6 5 0l5 6z" fill="#a3a3a3"/></svg>
<svg style="left:1274.5px;top:563.2px" width="5.2" height="2.4" viewBox="0 0 10 6"><path d="M0 0h10L5 6z" fill="#8a8a8a"/></svg>

<!-- footer -->
<svg style="left:14.200px;top:582.200px" width="13.400" height="13.400" viewBox="0 0 24 24"><path d="M12 2.200c1.200 0 2 .9 2.300 2.100l.2.800 1-.4c1.100-.6 2.400-.5 3.200.4s1 2.100.4 3.200l-.4 1 .8.2c1.200.3 2.100 1.100 2.100 2.300s-.9 2-2.100 2.300l-.8.200.4 1c.6 1.100.5 2.400-.4 3.200s-2.100 1-3.200.4l-1-.4-.2.800c-.3 1.200-1.100 2.100-2.300 2.100s-2-.9-2.300-2.100l-.2-.8-1 .4c-1.100.6-2.400.5-3.200-.4s-1-2.100-.4-3.200l.4-1-.8-.2C3.100 14 2.200 13.200 2.200 12s.9-2 2.100-2.300l.8-.2-.4-1c-.6-1.100-.5-2.400.4-3.200s2.100-1 3.200-.4l1 .4.200-.8C9.800 3.100 10.800 2.200 12 2.200z" fill="none" stroke="#484644" stroke-width="1.700" stroke-linejoin="round"/><circle cx="12" cy="12" r="3.200" fill="none" stroke="#484644" stroke-width="1.600"/></svg>
<svg style="left:123.600px;top:583.400px" width="11" height="10.600" viewBox="0 0 22 21"><rect x="1.200" y="1.200" width="17" height="15" rx="1.500" fill="none" stroke="#484644" stroke-width="1.600"/><path d="M1.200 5.200h17M5.500 8.500v5M8.500 8.500v5" stroke="#484644" stroke-width="1.500"/><circle cx="15.500" cy="15" r="4.600" fill="#484644"/><circle cx="15.500" cy="15" r="1.500" fill="#fff"/></svg>
<svg style="left:280.200px;top:585.400px" width="12.200" height="6.200" viewBox="0 0 24 12"><path d="M9.500 1.200H6a4.800 4.800 0 0 0 0 9.600h3.500M14.500 1.200H18a4.800 4.800 0 0 1 0 9.600h-3.500M7 6h10" fill="none" stroke="#484644" stroke-width="1.600" stroke-linecap="round"/></svg>
<svg style="left:351.800px;top:587px" width="5.800" height="3.400" viewBox="0 0 12 7"><path d="M1 1l5 5 5-5" fill="none" stroke="#605e5c" stroke-width="1.400"/></svg>
<div class="abs" id="asst"></div>
<svg style="left:991px;top:582px" width="12" height="12.600" viewBox="0 0 24 25.200"><path d="M10.800 1v2.200" stroke="#fff" stroke-width="1.800"/><rect x="4.600" y="3.200" width="12.600" height="9.400" rx="2.200" fill="none" stroke="#fff" stroke-width="1.900"/><circle cx="8.400" cy="7.600" r="1.300" fill="#fff"/><circle cx="13.400" cy="7.600" r="1.300" fill="#fff"/><path d="M12 16H4.400a2.300 2.300 0 0 0-2.300 2.300c0 3 3 4.700 8.100 4.700 1.800 0 3.200-.2 4.400-.6" fill="none" stroke="#fff" stroke-width="1.900" stroke-linecap="round"/><path d="M16.600 11.600l1.300 3.400 3.400 1.300-3.400 1.300-1.300 3.400-1.300-3.400-3.400-1.300 3.400-1.300z" fill="#fff"/><path d="M21.200 19.600l.8 1.900 1.900.8-1.900.8-.8 1.900-.8-1.900-1.900-.8 1.900-.8z" fill="#fff"/></svg>
<svg style="left:1068.800px;top:582px" width="12.400" height="12.200" viewBox="0 0 25 24.600"><path d="M2.600 7 10.600 2.400l8 4.600v4M2.600 7v10.400l8 4.600V11.600M2.600 7l8 4.600 8-4.600M6.600 4.700l8 4.600" fill="none" stroke="#3b3a39" stroke-width="1.700" stroke-linejoin="round"/><rect x="13.200" y="15.200" width="10.800" height="8.400" rx="1.200" fill="#2b2a29"/><path d="M15.600 15.200v-1.600a3 3 0 0 1 6 0v1.600" fill="none" stroke="#2b2a29" stroke-width="1.700"/><rect x="16.400" y="18" width="4.400" height="2" fill="#fff"/></svg>
<svg style="left:1184.300px;top:580.300px" width="11" height="11" viewBox="0 0 24 24"><circle cx="12" cy="12" r="10.600" fill="none" stroke="#484644" stroke-width="1.800"/><path d="M8.800 9.500a3.200 3.200 0 0 1 6.400 0c0 2.400-3.200 2.600-3.200 5" fill="none" stroke="#484644" stroke-width="1.600" stroke-linecap="round"/><circle cx="12" cy="17.600" r="1" fill="#484644"/></svg>

<span class="t" style="left:19.00px;top:9.91px;font-size:9.3px;line-height:12.09px;color:#ffffff;font-weight:700;transform:scaleX(0.9678)">SharePoint</span>
<span class="t" style="left:492.00px;top:10.80px;font-size:9.0px;line-height:11.7px;color:#3b3a39;font-weight:400;transform:scaleX(0.9183)">Søk på tvers av områder</span>
<span class="t" style="left:30.00px;top:37.66px;font-size:8.9px;line-height:11.57px;color:#323130;font-weight:400;-webkit-text-stroke:0.38px #323130;transform:scaleX(0.9978)">Prosjektportalen</span>
<span class="t" style="left:106.50px;top:37.66px;font-size:8.9px;line-height:11.57px;color:#4a4846;font-weight:400;transform:scaleX(0.9626)">Porteføljeoversikt</span>
<span class="t" style="left:190.00px;top:37.66px;font-size:8.9px;line-height:11.57px;color:#4a4846;font-weight:400;transform:scaleX(0.9582)">Porteføljeinnsikt</span>
<span class="t" style="left:268.00px;top:37.66px;font-size:8.9px;line-height:11.57px;color:#4a4846;font-weight:400;transform:scaleX(0.9560)">Gevinstoversikt</span>
<span class="t" style="left:343.00px;top:37.66px;font-size:8.9px;line-height:11.57px;color:#4a4846;font-weight:400;transform:scaleX(0.9656)">Erfaringslogg</span>
<span class="t" style="left:410.50px;top:37.66px;font-size:8.9px;line-height:11.57px;color:#4a4846;font-weight:400;transform:scaleX(0.9302)">Leveranseoversikt</span>
<span class="t" style="left:495.00px;top:37.66px;font-size:8.9px;line-height:11.57px;color:#4a4846;font-weight:400;transform:scaleX(0.9488)">Usikkerhetsoversikt</span>
<span class="t" style="left:585.50px;top:37.66px;font-size:8.9px;line-height:11.57px;color:#4a4846;font-weight:400;transform:scaleX(0.9285)">Ressursallokering</span>
<span class="t" style="left:668.50px;top:37.66px;font-size:8.9px;line-height:11.57px;color:#4a4846;font-weight:400;transform:scaleX(0.9648)">Prosjekttidslinje</span>
<span class="t" style="left:745.00px;top:37.66px;font-size:8.9px;line-height:11.57px;color:#4a4846;font-weight:400;transform:scaleX(0.9996)">Idémodul</span>
<span class="t" style="left:799.00px;top:37.66px;font-size:8.9px;line-height:11.57px;color:#03787c;font-weight:400;transform:scaleX(0.9166)">Rediger</span>
<span class="t" style="left:118.30px;top:56.46px;font-size:6.9px;line-height:8.97px;color:#323130;font-weight:400;transform:scaleX(1.0442)">Prosjektportalen</span>
<span class="t" style="left:90.40px;top:70.27px;font-size:15.2px;line-height:19.76px;color:#323130;font-weight:400;-webkit-text-stroke:0.65px #323130;transform:scaleX(0.9895)">Prosjektportalen</span>
<span class="t" style="left:90.80px;top:94.99px;font-size:8.4px;line-height:10.92px;color:#605e5c;font-weight:400;transform:scaleX(1.0529)">Offentlig gruppe</span>
<span class="t" style="left:1148.90px;top:69.77px;font-size:8.9px;line-height:11.57px;color:#323130;font-weight:400;transform:scaleX(0.9894)">Opprett område</span>
<span class="t" style="left:1236.50px;top:69.77px;font-size:8.9px;line-height:11.57px;color:#323130;font-weight:400;transform:scaleX(0.9160)">Følger</span>
<span class="t" style="left:1205.70px;top:93.27px;font-size:8.9px;line-height:11.57px;color:#323130;font-weight:400;transform:scaleX(0.9563)">68 medlemmer</span>
<span class="t" style="left:1205.40px;top:129.70px;font-size:9.0px;line-height:11.7px;color:#ffffff;font-weight:400;-webkit-text-stroke:0.39px #ffffff;transform:scaleX(0.9514)">Rediger</span>
<span class="t" style="left:58.90px;top:175.88px;font-size:9.5px;line-height:12.35px;color:#6a6867;font-weight:400;transform:scaleX(0.9972)">Søk i alle risikoelementer...</span>
<span class="t" style="left:1124.70px;top:176.38px;font-size:9.5px;line-height:12.35px;color:#424242;font-weight:400;transform:scaleX(0.8926)">Alle risikoelementer</span>
<span class="t" style="left:31.30px;top:583.97px;font-size:8.9px;line-height:11.57px;color:#323130;font-weight:400;transform:scaleX(0.9442)">Områdeinnstillinger</span>
<span class="t" style="left:138.40px;top:583.97px;font-size:8.9px;line-height:11.57px;color:#323130;font-weight:400;transform:scaleX(0.9268)">Konfigurasjon av Prosjektportalen</span>
<span class="t" style="left:295.90px;top:583.97px;font-size:8.9px;line-height:11.57px;color:#323130;font-weight:400;transform:scaleX(0.9398)">Nyttige lenker</span>
<span class="t" style="left:1008.00px;top:582.31px;font-size:9.6px;line-height:12.48px;color:#ffffff;font-weight:700;transform:scaleX(0.8938)">Assistent</span>
<span class="t" style="left:1084.70px;top:583.37px;font-size:8.9px;line-height:11.57px;color:#424242;font-weight:400;transform:scaleX(0.8965)">v1.11.1.fc848aa (main)</span>
<span class="t" style="left:1200.00px;top:580.66px;font-size:8.9px;line-height:11.57px;color:#323130;font-weight:400;transform:scaleX(0.9591)">Hjelp tilgjengelig</span>

<!-- annotation overlay -->
<svg style="left:0;top:0" width="1278" height="603" viewBox="0 0 1278 603">
<rect x="22.05" y="163.95" width="996.70" height="34.10" rx="5.05" fill="none" stroke="#be3c43" stroke-width="3.9"/>
<rect x="1059.00" y="161.95" width="202.55" height="35.90" rx="6.25" fill="none" stroke="#be3c43" stroke-width="3.9"/>
<rect x="13.72" y="205.96" width="1248.15" height="366.92" rx="60.38" fill="none" stroke="#be3c43" stroke-width="4.25"/>
<rect x="35.15" y="232.15" width="242.90" height="301.60" rx="41.05" fill="none" stroke="#0e5c5f" stroke-width="3.9"/>
<path d="M-13.65 1A13.65 13.65 0 1 1 13.65 1C13.65 10.32 5.00 24.77 0 35.95C-5.00 24.77 -13.65 10.32 -13.65 1Z" fill="#c00000" transform="translate(180.05 135.15) rotate(-0.41)"/>
<path d="M176.0 134.9 179.0 132.3H180.1V139.9H182.0V141.1H175.9V139.9H178.4V134.5L176.5 136.0Z" fill="#fff"/>
<path d="M-13.55 1A13.55 13.55 0 1 1 13.55 1C13.55 10.32 4.96 24.77 0 35.95C-4.96 24.77 -13.55 10.32 -13.55 1Z" fill="#c00000" transform="translate(1078.75 135.05) rotate(-0.58)"/><text x="1078.70" y="136.70" fill="#fff" font-family="Liberation Sans, sans-serif" font-weight="700" font-size="12.4" text-anchor="middle" dominant-baseline="central">2</text>
<path d="M-13.55 1A13.55 13.55 0 1 1 13.55 1C13.55 10.23 4.96 24.56 0 35.65C-4.96 24.56 -13.55 10.23 -13.55 1Z" fill="#c00000" transform="translate(1115.85 134.35) rotate(-0.58)"/><text x="1115.40" y="135.90" fill="#fff" font-family="Liberation Sans, sans-serif" font-weight="700" font-size="12.4" text-anchor="middle" dominant-baseline="central">3</text>
<path d="M-13.50 1A13.5 13.5 0 1 1 13.50 1C13.50 10.16 4.94 24.39 0 35.40C-4.94 24.39 -13.50 10.16 -13.50 1Z" fill="#c00000" transform="translate(1226.70 135.50) rotate(-0.84)"/><text x="1226.60" y="136.70" fill="#fff" font-family="Liberation Sans, sans-serif" font-weight="700" font-size="12.4" text-anchor="middle" dominant-baseline="central">4</text>
<path d="M-13.10 1A13.1 13.1 0 1 1 13.10 1C13.10 10.59 4.79 25.43 0 36.91C-4.79 25.43 -13.10 10.59 -13.10 1Z" fill="#c00000" transform="translate(13.00 225.10) rotate(-91.28)"/><text x="16.10" y="225.50" fill="#fff" font-family="Liberation Sans, sans-serif" font-weight="700" font-size="12.4" text-anchor="middle" dominant-baseline="central">5</text>
<path d="M-11.70 1A11.7 11.7 0 1 1 11.70 1C11.70 6.34 4.28 15.23 0 22.11C-4.28 15.23 -11.70 6.34 -11.70 1Z" fill="#0e5c5f" transform="translate(17.00 293.80) rotate(-91.36)"/><text x="17.20" y="293.30" fill="#fff" font-family="Liberation Sans, sans-serif" font-weight="700" font-size="10.8" text-anchor="middle" dominant-baseline="central">A</text>
</svg>
</body>
</html>
